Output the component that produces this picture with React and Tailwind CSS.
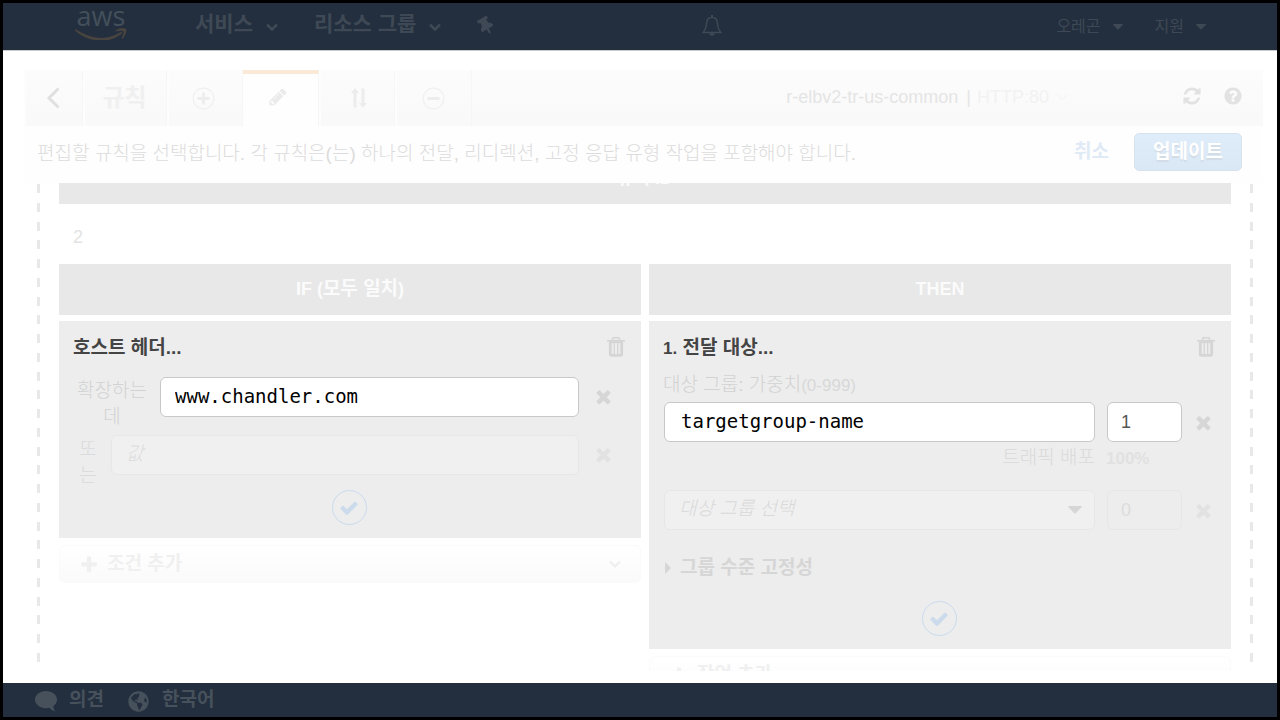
import { FaGlobeAmericas, FaThumbtack } from "react-icons/fa";

const PATHS = {
  times:
    "M1490 1322q0 40-28 68l-136 136q-28 28-68 28t-68-28l-294-294-294 294q-28 28-68 28t-68-28l-136-136q-28-28-28-68t28-68l294-294-294-294q-28-28-28-68t28-68l136-136q28-28 68-28t68 28l294 294 294-294q28-28 68-28t68 28l136 136q28 28 28 68t-28 68l-294 294 294 294q28 28 28 68z",
  check:
    "M1671 566q0 40-28 68l-724 724-136 136q-28 28-68 28t-68-28l-136-136-362-362q-28-28-28-68t28-68l136-136q28-28 68-28t68 28l294 295 656-657q28-28 68-28t68 28l136 136q28 28 28 68z",
  plus: "M1600 736v192q0 40-28 68t-68 28h-416v416q0 40-28 68t-68 28h-192q-40 0-68-28t-28-68v-416h-416q-40 0-68-28t-28-68v-192q0-40 28-68t68-28h416v-416q0-40 28-68t68-28h192q40 0 68 28t28 68v416h416q40 0 68 28t28 68z",
  pencil:
    "M491 1536l91-91-235-235-91 91v107h128v128h107zm523-928q0-22-22-22-10 0-17 7l-542 542q-7 7-7 17 0 22 22 22 10 0 17-7l542-542q7-7 7-17zm-54-192l416 416-832 832h-416v-416zm683 96q0 53-37 90l-166 166-416-416 166-165q36-38 90-38 53 0 91 38l235 234q37 39 37 91z",
  refresh:
    "M1639 1056q0 5-1 7-64 268-268 434.5t-478 166.5q-146 0-282.5-55t-243.5-157l-129 129q-19 19-45 19t-45-19-19-45v-448q0-26 19-45t45-19h448q26 0 45 19t19 45-19 45l-137 137q71 66 161 102t187 36q134 0 250-65t186-179q11-17 53-117 8-23 30-23h192q13 0 22.5 9.5t9.5 22.5zm25-800v448q0 26-19 45t-45 19h-448q-26 0-45-19t-19-45 19-45l138-138q-148-137-349-137-134 0-250 65t-186 179q-11 17-53 117-8 23-30 23h-199q-13 0-22.5-9.5t-9.5-22.5v-7q65-268 270-434.5t480-166.5q146 0 284 55.5t245 156.5l130-129q19-19 45-19t45 19 19 45z",
  question:
    "M1024 1376v-192q0-14-9-23t-23-9h-192q-14 0-23 9t-9 23v192q0 14 9 23t23 9h192q14 0 23-9t9-23zm256-672q0-88-55.5-163t-138.5-116-170-41q-243 0-371 213-15 24 8 42l132 100q7 6 19 6 16 0 25-12 53-68 86-92 34-24 86-24 48 0 85.5 26t37.5 59q0 38-20 61t-68 45q-63 28-115.5 86.5t-52.5 125.5v36q0 14 9 23t23 9h192q14 0 23-9t9-23q0-19 21.5-49.5t54.5-49.5q32-18 49-28.5t46-35 44.5-48 28-60.5 12.5-81zm384 192q0 209-103 385.5t-279.5 279.5-385.5 103-385.5-103-279.5-279.5-103-385.5 103-385.5 279.5-279.5 385.5-103 385.5 103 279.5 279.5 103 385.5z",
};

function Glyph({ name, className }) {
  return (
    <svg viewBox="0 0 1792 1792" fill="currentColor" className={className} aria-hidden="true">
      <path d={PATHS[name]} />
    </svg>
  );
}

function Chevron({ className, width = 2 }) {
  return (
    <svg viewBox="0 0 12 8" fill="none" stroke="currentColor" strokeWidth={width} className={className} aria-hidden="true">
      <path d="M1 1.5l5 5 5-5" />
    </svg>
  );
}

function Caret({ className }) {
  return (
    <svg viewBox="0 0 12 7" fill="currentColor" className={className} aria-hidden="true">
      <path d="M0.6 0h10.8q.8.3.3 1L6.7 6.3q-.7.6-1.4 0L.3 1Q-.2.3.6 0z" />
    </svg>
  );
}

function Trash() {
  return (
    <button type="button" aria-label="삭제" className="flex text-[#d5d5d5]">
      <svg viewBox="0 0 18 20" className="h-5 w-[18px]" fill="none" stroke="currentColor" aria-hidden="true">
        <path d="M5.500 3.500V2q0-1.200 1.200-1.200h4.600Q12.500.800 12.500 2v1.500" strokeWidth="1.500" />
        <path d="M0 3.800h18" strokeWidth="1.700" />
        <path d="M3.300 4.500V17q0 1.300 1.300 1.300h8.800q1.300 0 1.300-1.300V4.500" strokeWidth="2.800" />
        <path d="M3 5.200h12" strokeWidth="1.800" />
        <path d="M7.300 6v11M10.700 6v11" strokeWidth="1.300" />
      </svg>
    </button>
  );
}

function Remove({ faded }) {
  return (
    <button type="button" aria-label="제거" className={faded ? "flex text-[#e2e2e2]" : "flex text-[#d6d6d6]"}>
      <Glyph name="times" className="size-[21px]" />
    </button>
  );
}

function Confirm() {
  return (
    <button
      type="button"
      aria-label="확인"
      className="flex size-[35px] items-center justify-center rounded-full border border-[#c9dbee] text-[#ccdbeb]"
    >
      <Glyph name="check" className="size-5" />
    </button>
  );
}

function CircleIcon({ minus }) {
  return (
    <svg viewBox="0 0 24 24" className="size-[23px]" aria-hidden="true">
      <circle cx="12" cy="12" r="10.800" fill="none" stroke="#f0f0f0" strokeWidth="1.200" />
      <path d={minus ? "M7 12h10" : "M7 12h10M12 7v10"} stroke="#ededed" strokeWidth="3" strokeLinecap="round" />
    </svg>
  );
}

function Dashes() {
  return (
    <div className="flex w-[3px] flex-col justify-between pt-px pb-[9px]" aria-hidden="true">
      {Array.from({ length: 26 }, (_, i) => (
        <span key={i} className="block h-[9px] bg-[#e8e8e8]" />
      ))}
    </div>
  );
}

function AddButton({ children }) {
  return (
    <button
      type="button"
      className="mt-[7px] flex h-[38px] w-full shrink-0 items-center rounded-md border border-[#fafafa] bg-linear-to-b from-white to-[#fafafa] px-[19px] font-bold text-[#f0f0f0]"
    >
      <Glyph name="plus" className="mt-px size-5" />
      <span className="ml-2 leading-[26px]">{children}</span>
      <Chevron className="ml-auto h-2 w-3 text-[#efefef]" />
    </button>
  );
}

function ColumnHeader({ children }) {
  return (
    <h2 className="h-[51px] shrink-0 bg-[#e8e8e8] pt-3 text-center text-lg leading-[26px] font-bold text-[#fbfbfb]">
      {children}
    </h2>
  );
}

function CardTitle({ children }) {
  return (
    <div className="flex h-[26px] items-center justify-between">
      <h3 className="pt-[2px] font-bold text-[#444]">{children}</h3>
      <Trash />
    </div>
  );
}

const tab = "flex items-center justify-center border-r border-[#f6f6f6] shadow-[inset_2px_0_0_#fdfdfd]";
const field = "h-10 min-w-0 rounded-md border outline-none";

export default function App() {
  return (
    <div className="flex h-screen flex-col overflow-hidden border-[3px] border-black bg-white font-['Liberation_Sans','Noto_Sans_CJK_KR',sans-serif] text-[19px] leading-[26px]">
      <header className="flex h-12 shrink-0 items-start border-b border-[#c8cacd] bg-[#232f3e] pr-[71px] pl-[72px] text-[#3e4955]">
        <a href="#home" aria-label="aws" className="flex w-[52px] flex-col items-center">
          <span className="h-[25px] font-['Open_Sans',sans-serif] text-[27px] leading-[26px] font-medium text-[#43505b]">aws</span>
          <svg viewBox="0 0 52 12" className="h-3 w-[52px]" aria-hidden="true">
            <path d="M.5 1.500Q25 17.500 45.500 4.500q2-.8 1.200.8C34 16 14 14.500.2 2.500q-.5-1 .3-1z" fill="#4b4540" stroke="#4b4540" strokeWidth=".6" />
            <path d="M41 2.200q5-3 10-1.200 1 4-3.200 9.200-1.300 1-.8-.6Q49.500 4 48.800 3.200 47 2 41.300 3q-1.300 0-.3-.8z" fill="#4b4540" stroke="#4b4540" strokeWidth=".4" />
          </svg>
        </a>
        <nav className="ml-[68px] flex h-[42px] items-center text-[21px] font-bold">
          <button type="button" className="flex items-center gap-[13px]">
            서비스
            <Chevron width={2.600} className="mt-[5px] h-2 w-3" />
          </button>
          <button type="button" className="ml-9 flex items-center gap-[13px]">
            리소스 그룹
            <Chevron width={2.600} className="mt-[5px] h-2 w-3" />
          </button>
          <button type="button" aria-label="고정" className="ml-9 flex">
            <FaThumbtack className="mt-1 size-[18px] -rotate-[30deg]" />
          </button>
        </nav>
        <button type="button" aria-label="알림" className="mt-3 ml-[207px] flex">
          <svg viewBox="0 0 20 21" className="h-[21px] w-5" fill="none" stroke="currentColor" strokeWidth="1.500" aria-hidden="true">
            <path d="M10 2.500c-4 0-5.500 3-5.500 6.500 0 4.500-1.500 6-3.300 8.500h17.600C17 15 15.500 13.500 15.500 9c0-3.500-1.500-6.500-5.500-6.500z" />
            <path d="M10 0v2.500" strokeWidth="2" />
            <path d="M7 18.200h6q-.5 2.600-3 2.600t-3-2.600z" fill="currentColor" stroke="none" />
          </svg>
        </button>
        <nav className="ml-auto flex h-12 items-center gap-8 text-base">
          <button type="button" className="flex items-center gap-3">
            오레곤
            <Caret className="h-[6px] w-[10px]" />
          </button>
          <button type="button" className="flex items-center gap-3">
            지원
            <Caret className="h-[6px] w-[10px]" />
          </button>
        </nav>
      </header>

      <main className="flex min-h-0 flex-1 flex-col pt-[19px] pr-[14px] pb-3 pl-[21px]">
        <div className="flex h-14 shrink-0 bg-linear-to-b from-[#fcfcfc] to-[#f9f9f9]">
          <button type="button" aria-label="뒤로" className={`${tab} w-[59px]`}>
            <svg viewBox="0 0 14 22" className="h-[22px] w-[14px]" fill="none" stroke="#e0e0e0" strokeWidth="3" aria-hidden="true">
              <path d="M12.500 1.500L3 11l9.500 9.500" />
            </svg>
          </button>
          <h1 className={`${tab} w-[84px] text-2xl font-bold text-[#f0f0f0]`}>규칙</h1>
          <button type="button" aria-label="규칙 추가" className={`${tab} w-[76px] pr-[2px]`}>
            <CircleIcon />
          </button>
          <button
            type="button"
            aria-label="규칙 편집"
            className="flex w-[76px] items-center justify-center border-t-4 border-r border-t-[#fbe9d7] border-r-[#f6f6f6] bg-[#fefefe] pr-[6px] pb-[6px] text-[#ebebeb]"
          >
            <Glyph name="pencil" className="size-5" />
          </button>
          <button type="button" aria-label="규칙 순서 변경" className={`${tab} w-[76px] pl-1`}>
            <svg viewBox="0 0 16 20" className="h-5 w-4" fill="#ececec" aria-hidden="true">
              <path d="M4 0l4 5H5.500v14.500h-3V5H0zM12 20l-4-5h2.500V.5h3V15H16z" />
            </svg>
          </button>
          <button type="button" aria-label="규칙 삭제" className={`${tab} w-[77px]`}>
            <CircleIcon minus />
          </button>
          <div className="ml-auto flex items-center pr-5 pb-[2px] text-lg text-[#e5e5e5]">
            <span>r-elbv2-tr-us-common</span>
            <span className="ml-2">|</span>
            <button type="button" className="ml-[6px] flex items-center gap-[7px] text-[#f2f2f2]">
              HTTP:80
              <Chevron width={1} className="h-2 w-3" />
            </button>
            <button type="button" aria-label="새로 고침" className="ml-[114px] flex text-[#e2e2e2]">
              <Glyph name="refresh" className="mb-[3px] size-5" />
            </button>
            <button type="button" aria-label="도움말" className="ml-[21px] flex text-[#e2e2e2]">
              <Glyph name="question" className="mb-[3px] size-5" />
            </button>
          </div>
        </div>

        <div className="flex h-[57px] shrink-0 items-center bg-[#fefefe] pr-[21px] pb-[5px] pl-[13px]">
          <p className="pt-[3px] font-light text-[#dcdcdc]">
            편집할 규칙을 선택합니다. 각 규칙은(는) 하나의 전달, 리디렉션, 고정 응답 유형 작업을 포함해야 합니다.
          </p>
          <button type="button" className="ml-auto font-bold text-[#dfeaf6]">
            취소
          </button>
          <button
            type="button"
            className="ml-[25px] h-[38px] w-[108px] rounded-[5px] border border-[#d6e2ee] bg-linear-to-b from-[#dfedfb] to-[#dae7f4] font-bold text-white text-shadow-[0_2px_1px_#d2dce6]"
          >
            업데이트
          </button>
        </div>

        <div className="flex min-h-0 flex-1 overflow-hidden pr-[10px] pl-[13px]">
          <Dashes />
          <div className="flex min-w-0 flex-1 flex-col px-[19px]">
            <div className="flex h-[21px] shrink-0 flex-col justify-end overflow-hidden">
              <ColumnHeader>규칙 ID</ColumnHeader>
            </div>
            <p className="h-[60px] shrink-0 px-[14px] pt-5 text-lg leading-[26px] text-[#e3e3e3]">2</p>
            <div className="grid min-h-0 grid-cols-2 gap-2">
              <section className="flex min-w-0 flex-col">
                <ColumnHeader>
                  IF (<span className="text-[19px]">모두 일치</span>)
                </ColumnHeader>
                <div className="mt-[6px] flex h-[217px] shrink-0 flex-col bg-[#ededed] pt-[13px] pr-4 pl-[14px]">
                  <CardTitle>호스트 헤더...</CardTitle>
                  <div className="mt-[17px] flex h-[58px] items-start pr-[11px]">
                    <label htmlFor="host" className="mt-px w-[78px] shrink-0 text-center font-light text-[#d2d2d2]">
                      확장하는
                      <br />데
                    </label>
                    <input
                      id="host"
                      defaultValue="www.chandler.com"
                      className={`${field} ml-[9px] flex-1 border-[#c8c8c8] bg-white px-[14px] pb-[2px] font-['DejaVu_Sans_Mono',monospace] text-[19px] text-black`}
                    />
                    <div className="ml-[14px] flex h-[38px] items-center">
                      <Remove />
                    </div>
                  </div>
                  <div className="flex h-[55px] items-start pr-[11px]">
                    <label htmlFor="host-value" className="mt-[2px] w-[30px] shrink-0 text-center font-light text-[#dadada]">
                      또<br />는
                    </label>
                    <input
                      id="host-value"
                      placeholder="값"
                      className={`${field} ml-2 flex-1 border-[#e7e7e7] bg-[#f0f0f0] px-[14px] pb-[2px] font-light italic placeholder:text-[#dcdcdc]`}
                    />
                    <div className="ml-[14px] flex h-[38px] items-center">
                      <Remove faded />
                    </div>
                  </div>
                  <div className="flex justify-center">
                    <Confirm />
                  </div>
                </div>
                <AddButton>조건 추가</AddButton>
              </section>

              <section className="flex min-w-0 flex-col">
                <ColumnHeader>THEN</ColumnHeader>
                <div className="mt-[6px] flex h-[328px] shrink-0 flex-col bg-[#ededed] pt-[13px] pr-4 pl-[14px]">
                  <CardTitle>
                    <span className="text-[17px]">1.</span> 전달 대상...
                  </CardTitle>
                  <label htmlFor="target" className="mt-3 block h-[26px] font-light text-[#d2d2d2]">
                    대상 그룹: 가중치<span className="text-[17px] text-[#d8d8d8]">(0-999)</span>
                  </label>
                  <div className="mt-1 flex items-center pr-px pl-px">
                    <input
                      id="target"
                      defaultValue="targetgroup-name"
                      className={`${field} flex-1 border-[#c8c8c8] bg-white px-4 pb-[2px] font-['DejaVu_Sans_Mono',monospace] text-[19px] text-black`}
                    />
                    <input
                      aria-label="가중치 1"
                      defaultValue="1"
                      className={`${field} ml-3 w-[75px] border-[#c8c8c8] bg-white px-[13px] text-lg text-[#555]`}
                    />
                    <div className="ml-[11px]">
                      <Remove />
                    </div>
                  </div>
                  <div className="mt-[3px] flex h-[26px] text-[#e1e1e1]">
                    <span className="flex-1 text-right font-light text-[#dadada]">트래픽 배포</span>
                    <b className="ml-[11px] w-[109px] text-[17px] leading-[28px]">100%</b>
                  </div>
                  <div className="mt-[19px] flex items-center pr-px pl-px">
                    <div className="relative flex min-w-0 flex-1">
                      <select
                        aria-label="대상 그룹 선택"
                        className={`${field} flex-1 appearance-none border-[#e7e7e7] bg-[#f0f0f0] px-[14px] pb-[2px] font-light text-[#d9d9d9] italic`}
                      >
                        <option>대상 그룹 선택</option>
                      </select>
                      <Caret className="pointer-events-none absolute top-4 right-[13px] h-2 w-[14px] text-[#d6d6d6]" />
                    </div>
                    <input
                      aria-label="가중치 2"
                      defaultValue="0"
                      className={`${field} ml-3 w-[75px] border-[#e7e7e7] bg-[#ededed] px-[13px] text-lg text-[#dcdcdc]`}
                    />
                    <div className="ml-[11px]">
                      <Remove faded />
                    </div>
                  </div>
                  <button type="button" className="mt-[25px] flex items-center gap-[9px] pl-[2px] font-bold text-[#d6d6d6]">
                    <svg viewBox="0 0 6 12" className="h-3 w-[6px]" fill="currentColor" aria-hidden="true">
                      <path d="M0 0l6 6-6 6z" />
                    </svg>
                    그룹 수준 고정성
                  </button>
                  <div className="mt-5 flex justify-center">
                    <Confirm />
                  </div>
                </div>
                <AddButton>작업 추가</AddButton>
              </section>
            </div>
          </div>
          <Dashes />
        </div>
      </main>

      <footer className="flex h-[34px] shrink-0 items-center bg-[#232f3e] pl-8 font-bold text-[#46515c]">
        <a href="#feedback" className="flex items-center gap-3">
          <svg viewBox="0 0 22 22" className="mt-[2px] size-[22px]" fill="currentColor" aria-hidden="true">
            <path d="M11 1C5 1 0 4.700 0 9.500s5 8.700 11 8.700q1.600 0 3.200-.4 2.300 3 6.300 3.700-2.200-2.500-2.300-5.200Q22 13.500 22 9.500C22 4.700 17 1 11 1z" />
          </svg>
          의견
        </a>
        <a href="#language" className="ml-6 flex items-center gap-[13px]">
          <FaGlobeAmericas className="mt-[2px] size-[21px]" />
          한국어
        </a>
      </footer>
    </div>
  );
}
